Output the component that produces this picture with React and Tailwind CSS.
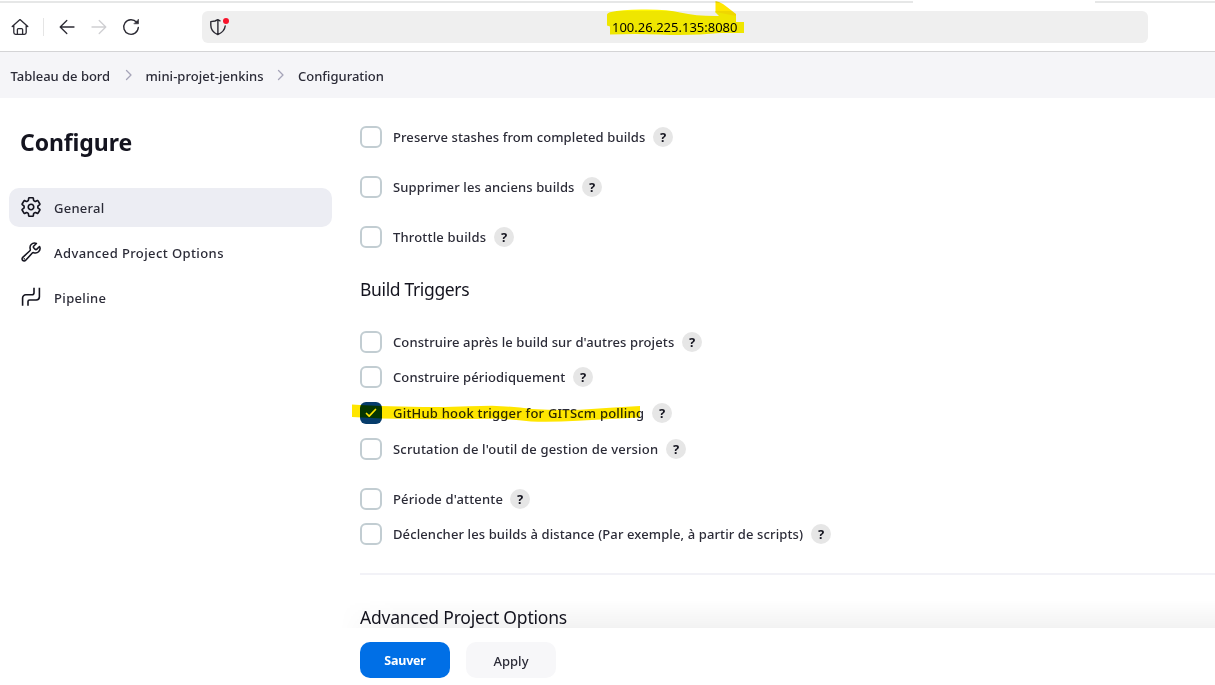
const home = (
  <svg width="18" height="18" viewBox="0 0 18 18" fill="none" stroke="#2b2a33" strokeWidth="1.3" strokeLinejoin="round" strokeLinecap="round">
    <path d="M1.2 8.6 9 1.6l7.8 7M2.8 7.4v7.2a1.8 1.8 0 0 0 1.8 1.8h8.8a1.8 1.8 0 0 0 1.8-1.8V7.4M6.4 16.2v-4.6a1 1 0 0 1 1-1h3.2a1 1 0 0 1 1 1v4.6" />
  </svg>
);

const gear = (
  <svg width="22" height="22" viewBox="0 0 512 512" fill="none" stroke="#14141f" strokeWidth="38" strokeLinecap="round" strokeLinejoin="round">
    <path d="M262.29 192.31a64 64 0 1 0 57.4 57.4 64.13 64.13 0 0 0-57.4-57.4zM416.39 256a154.34 154.34 0 0 1-1.53 20.79l45.21 35.46a10.81 10.81 0 0 1 2.45 13.75l-42.77 74a10.81 10.81 0 0 1-13.14 4.59l-44.9-18.08a16.11 16.11 0 0 0-15.17 1.75A164.48 164.48 0 0 1 325 400.8a15.94 15.94 0 0 0-8.82 12.14l-6.73 47.89a11.08 11.08 0 0 1-10.68 9.17h-85.54a11.11 11.11 0 0 1-10.69-8.87l-6.72-47.82a16.07 16.07 0 0 0-9-12.22 155.3 155.3 0 0 1-21.46-12.57 16 16 0 0 0-15.11-1.71l-44.89 18.07a10.81 10.81 0 0 1-13.14-4.58l-42.77-74a10.8 10.8 0 0 1 2.45-13.75l38.21-30a16.05 16.05 0 0 0 6-14.08c-.36-4.17-.58-8.33-.58-12.5s.21-8.27.58-12.35a16 16 0 0 0-6.07-13.94l-38.19-30A10.81 10.81 0 0 1 49.48 186l42.77-74a10.81 10.81 0 0 1 13.14-4.59l44.9 18.08a16.11 16.11 0 0 0 15.17-1.75A164.48 164.48 0 0 1 187 111.2a15.94 15.94 0 0 0 8.82-12.14l6.73-47.89A11.08 11.08 0 0 1 213.23 42h85.54a11.11 11.11 0 0 1 10.69 8.87l6.72 47.82a16.07 16.07 0 0 0 9 12.22 155.3 155.3 0 0 1 21.46 12.57 16 16 0 0 0 15.11 1.71l44.89-18.07a10.81 10.81 0 0 1 13.14 4.58l42.77 74a10.8 10.8 0 0 1-2.45 13.75l-38.21 30a16.05 16.05 0 0 0-6.05 14.08c.33 4.14.55 8.3.55 12.47z" />
  </svg>
);

const wrench = (
  <svg width="22" height="22" viewBox="0 0 512 512" fill="none" stroke="#14141f" strokeWidth="36" strokeLinecap="round" strokeLinejoin="round">
    <path d="M393.87 190a32.1 32.1 0 0 1-45.25 0l-26.57-26.57a32.09 32.09 0 0 1 0-45.26L382.19 58a1 1 0 0 0-.3-1.64c-38.82-16.64-89.15-8.16-121.11 23.57-30.58 30.35-32.32 76-21.12 115.84a31.93 31.93 0 0 1-9.06 32.08L64 380a48.17 48.17 0 1 0 68 68l153.86-167a31.93 31.93 0 0 1 31.6-9.13c39.54 10.59 84.54 8.6 114.72-21.19 32.49-32 39.5-88.56 23.75-120.93a1 1 0 0 0-1.6-.26z" />
    <circle cx="96" cy="416" r="8" strokeWidth="16" />
  </svg>
);

const pipeline = (
  <svg width="22" height="22" viewBox="0 0 22 22" fill="none" stroke="#14141f" strokeWidth="1.6">
    <path d="M2.6 19.8V12a3.2 3.2 0 0 1 3.2-3.2H12a2 2 0 0 0 2-2V1.8M8 19.8v-4.200a1.600 1.600 0 0 1 1.600-1.600h6.600a3.200 3.200 0 0 0 3.200-3.200V1.800" />
  </svg>
);

function Chevron() {
  return (
    <svg className="-mt-[3px]" width="8" height="12" viewBox="0 0 8 12" fill="none" stroke="#a5a4b8" strokeWidth="1.3" strokeLinecap="round" strokeLinejoin="round">
      <path d="M1.500 1.500 6 6l-4.500 4.500" />
    </svg>
  );
}

function Help() {
  return (
    <span className="ml-[7px] flex size-5 shrink-0 items-center justify-center rounded-full bg-[#e6e6e6] text-[13px] font-bold leading-none text-[#14141f]">?</span>
  );
}

function Option({ label, width, tracking, checked, className = "" }) {
  return (
    <div className={`flex h-[22px] shrink-0 items-center ${className}`}>
      {checked ? (
        <span className="flex size-[22px] shrink-0 items-center justify-center rounded-[6px] bg-[#063c6b]">
          <svg width="12" height="10" viewBox="0 0 12 10" fill="none" stroke="#fff" strokeWidth="1.700" strokeLinecap="round" strokeLinejoin="round">
            <path d="m1.500 5.500 2.700 2.700L10.500 1.500" />
          </svg>
        </span>
      ) : (
        <span className="size-[22px] shrink-0 rounded-[6px] border-2 border-[#c2cdd2] bg-white" />
      )}
      <span className={`ml-[11px] shrink-0 whitespace-nowrap pt-px ${width} ${tracking}`}>{label}</span>
      <Help />
    </div>
  );
}

function NavItem({ icon, label, active, tracking }) {
  return (
    <div className={`flex h-[39px] items-center gap-3 rounded-[10px] pl-[11px] ${active ? "bg-[#ecedf3]" : ""}`}>
      <span className="-mt-0.5">{icon}</span>
      <span className={`pt-0.5 ${tracking}`}>{label}</span>
    </div>
  );
}

export default function App() {
  return (
    <div className="relative flex h-[685px] w-[1215px] flex-col overflow-hidden bg-white font-['Noto_Sans',sans-serif] text-[13px] font-medium text-[#2b2b37]">
      <div className="flex h-[3px] shrink-0 justify-between pt-px">
        <div className="h-[2px] w-[913px] bg-[#e6e7e7]" />
        <div className="h-[2px] w-[120px] bg-[#e6e7e7]" />
      </div>
      <div className="flex h-[49px] shrink-0 items-center border-b border-[#d4d4d6] pl-[11px]">
        {home}
        <div className="ml-[14px] h-[18px] w-px bg-[#e5e5e5]" />
        <svg className="ml-[15px]" width="16" height="16" viewBox="0 0 16 16" fill="none" stroke="#2b2a33" strokeWidth="1.300" strokeLinecap="round" strokeLinejoin="round">
          <path d="M15 8H1.500M7.800 1.500 1.200 8l6.600 6.500" />
        </svg>
        <svg className="ml-4" width="16" height="16" viewBox="0 0 16 16" fill="none" stroke="#cfcfd2" strokeWidth="1.300" strokeLinecap="round" strokeLinejoin="round">
          <path d="M1 8h13.500M8.200 1.500 14.800 8l-6.600 6.500" />
        </svg>
        <svg className="ml-[15px]" width="18" height="18" viewBox="0 0 18 18" fill="none" stroke="#2b2a33" strokeWidth="1.400" strokeLinecap="round" strokeLinejoin="round">
          <path d="M16.300 9.500A7.300 7.300 0 1 1 14.600 4.300" />
          <path d="M16.500 1.500v4.300h-4.300z" fill="#2b2a33" strokeWidth=".6" />
        </svg>
        <div className="ml-[62px] flex h-8 w-[946px] items-center rounded-[6px] bg-[#efefef] pl-2">
          <svg width="20" height="18" viewBox="0 0 20 18" fill="none" stroke="#2b2a33" strokeWidth="1.400" strokeLinecap="round" strokeLinejoin="round">
            <path d="M10 2.800 7.800 1.600 5 3 .8 3.600v3.600c0 4.200 2.600 7.500 7 9.400 4.400-1.900 7-4.800 7.400-8.600M7.900 1.800v14.500" />
            <circle cx="16" cy="3" r="3" fill="#f8132b" stroke="none" />
          </svg>
          <span className="ml-[382px] whitespace-nowrap pt-0.5 text-[13px] font-normal text-black">100.26.225.135:8080</span>
        </div>
      </div>
      <div className="flex h-[46px] shrink-0 items-center bg-[#f5f5f8] pl-[10.5px] pt-[3px]">
        <span className="w-[114px] whitespace-nowrap tracking-[-0.02px]">Tableau de bord</span>
        <Chevron />
        <span className="ml-[13px] w-[131px] whitespace-nowrap tracking-[0.04px]">mini-projet-jenkins</span>
        <Chevron />
        <span className="ml-[13.5px] whitespace-nowrap">Configuration</span>
      </div>
      <div className="flex h-[587px] shrink-0">
        <aside className="w-[332px] shrink-0 pl-[9px] pt-[27px]">
          <h1 className="mb-[29px] pl-[11px] text-[23px] font-bold leading-[34px] tracking-[-0.1px] text-[#14141f]">Configure</h1>
          <nav className="flex flex-col gap-1.5">
            <NavItem icon={gear} label="General" tracking="tracking-[0.25px]" active />
            <NavItem icon={wrench} label="Advanced Project Options" tracking="tracking-[0.4px]" />
            <NavItem icon={pipeline} label="Pipeline" tracking="tracking-[0.35px]" />
          </nav>
        </aside>
        <div className="flex flex-1 flex-col">
          <main className="flex h-[530px] flex-col overflow-hidden pl-7 pt-[28px]">
            <Option label="Preserve stashes from completed builds" width="w-[253px]" tracking="tracking-[0.1px]" />
            <Option label="Supprimer les anciens builds" width="w-[182px]" tracking="tracking-[0.12px]" className="mt-7" />
            <Option label="Throttle builds" width="w-[94px]" tracking="tracking-[0.18px]" className="mt-7" />
            <h2 className="mt-[27px] h-[28px] shrink-0 text-[17.5px] font-normal leading-[28px] tracking-[-0.35px] text-[#14141f]">Build Triggers</h2>
            <Option label="Construire après le build sur d'autres projets" width="w-[282px]" tracking="tracking-[0.11px]" className="mt-[28px]" />
            <Option label="Construire périodiquement" width="w-[173px]" tracking="tracking-[0.11px]" className="mt-[13px]" />
            <Option label="GitHub hook trigger for GITScm polling" width="w-[252px]" tracking="tracking-[0.21px]" className="mt-[14px]" checked />
            <Option label="Scrutation de l'outil de gestion de version" width="w-[266px]" tracking="tracking-[0.19px]" className="mt-[14px]" />
            <Option label="Période d'attente" width="w-[110px]" tracking="tracking-[0.16px]" className="mt-7" />
            <Option label="Déclencher les builds à distance (Par exemple, à partir de scripts)" width="w-[411px]" tracking="tracking-[0.11px]" className="mt-[13px]" />
            <div className="mt-7 h-0.5 shrink-0 bg-[#f2f2f7]" />
            <h2 className="mt-[28px] h-[28px] shrink-0 text-[17.5px] font-normal leading-[28px] tracking-[-0.2px] text-[#14141f]">Advanced Project Options</h2>
          </main>
          <footer className="relative flex h-[57px] gap-4 bg-white pl-7 pt-[14px]">
            <div className="absolute bottom-full left-2 right-0 h-7 bg-gradient-to-t from-black/5 to-transparent [mask-image:linear-gradient(to_right,transparent,black_60px)]" />
            <button className="flex h-9 w-[90px] items-center justify-center rounded-[10px] bg-[#006fe6] pt-[3px] text-[12.5px] font-bold tracking-[-0.2px] text-white">Sauver</button>
            <button className="flex h-9 w-[90px] items-center justify-center rounded-[10px] bg-[#f7f7f9] pt-[3px] text-[13px]">Apply</button>
          </footer>
        </div>
      </div>
      <svg className="pointer-events-none absolute left-0 top-0 mix-blend-multiply" width="1215" height="685" viewBox="0 0 1215 685">
        <path d="M607 15q0-2 4-3 10-2.500 30-2.500 26-.5 39 3 16 3.500 35 3.500l4 0-4-4V11.500L736 14v8h8v11h-24q-30 3-60 1.500-25-1-50 0V26.500l-3-1z" fill="#fff600" />
        <path d="M715.500 1 719 2q5 2 8 5l9 7v2l-20.500-4z" fill="#ffe600" />
        <path d="M352 404.500l8 .5q40 2 85 2 24-1 47-1.300 20 .8 40 3.300 25 1.500 48 .7 30-2 60-3.700v11.500q-30 1.500-62 3.200-25 1.500-47 .8-20-2.500-36-2.700-60 1-113-.3-15-1-30-1.500z" fill="#ffe600" />
      </svg>
    </div>
  );
}
